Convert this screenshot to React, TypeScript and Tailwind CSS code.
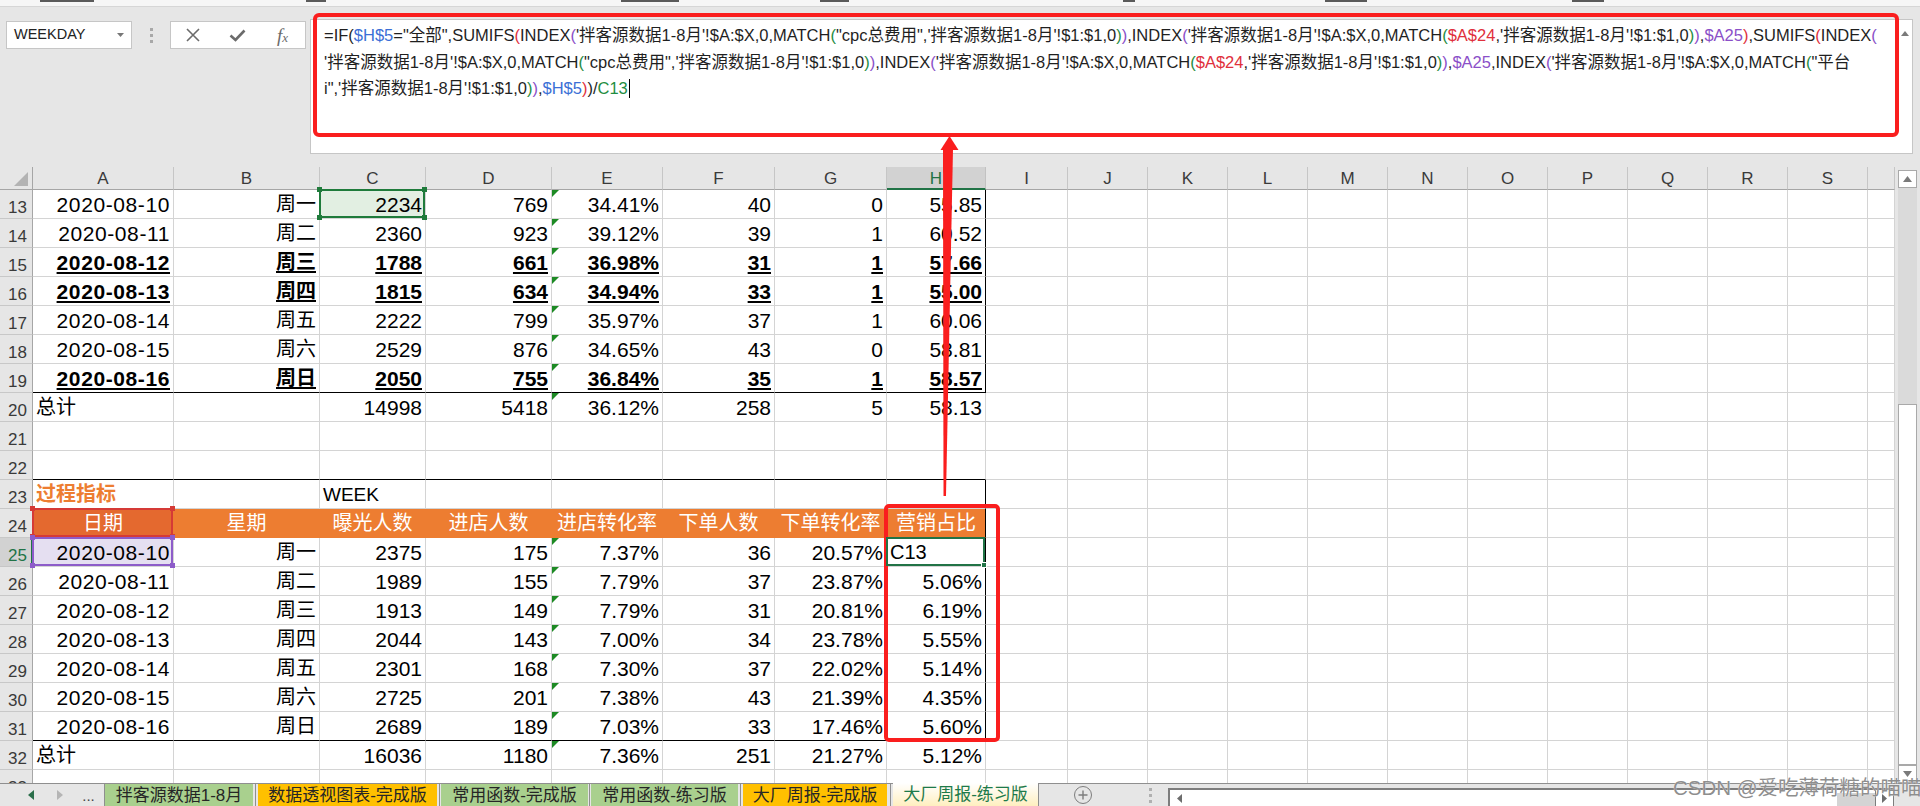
import React from 'react';

const FONT = "font-['Liberation_Sans','Noto_Sans_CJK_SC',sans-serif]";

type Cell = {
  t: string;
  a?: 'l' | 'r' | 'c';
  b?: boolean;
  u?: boolean;
  cjk?: boolean;
  date?: boolean;
  fs?: string;
  color?: string;
};

const W1 = [
  ['2020-08-10', '周一', '2234', '769', '34.41%', '40', '0', '55.85'],
  ['2020-08-11', '周二', '2360', '923', '39.12%', '39', '1', '60.52'],
  ['2020-08-12', '周三', '1788', '661', '36.98%', '31', '1', '57.66'],
  ['2020-08-13', '周四', '1815', '634', '34.94%', '33', '1', '55.00'],
  ['2020-08-14', '周五', '2222', '799', '35.97%', '37', '1', '60.06'],
  ['2020-08-15', '周六', '2529', '876', '34.65%', '43', '0', '58.81'],
  ['2020-08-16', '周日', '2050', '755', '36.84%', '35', '1', '58.57'],
];
const BOLD1 = [false, false, true, true, false, false, true];

const W2 = [
  ['2020-08-10', '周一', '2375', '175', '7.37%', '36', '20.57%', 'C13'],
  ['2020-08-11', '周二', '1989', '155', '7.79%', '37', '23.87%', '5.06%'],
  ['2020-08-12', '周三', '1913', '149', '7.79%', '31', '20.81%', '6.19%'],
  ['2020-08-13', '周四', '2044', '143', '7.00%', '34', '23.78%', '5.55%'],
  ['2020-08-14', '周五', '2301', '168', '7.30%', '37', '22.02%', '5.14%'],
  ['2020-08-15', '周六', '2725', '201', '7.38%', '43', '21.39%', '4.35%'],
  ['2020-08-16', '周日', '2689', '189', '7.03%', '33', '17.46%', '5.60%'],
];

function dataRow(v: string[], bold = false): (Cell | null)[] {
  return v.map((t, i) => ({ t, a: 'r', b: bold, u: bold, cjk: i === 1, date: i === 0 }));
}

const ROWS: Record<number, (Cell | null)[]> = {};
W1.forEach((v, i) => (ROWS[13 + i] = dataRow(v, BOLD1[i])));
ROWS[20] = [
  { t: '总计', a: 'l', cjk: true },
  null,
  ...['14998', '5418', '36.12%', '258', '5', '58.13'].map((t) => ({ t, a: 'r' } as Cell)),
];
ROWS[23] = [
  { t: '过程指标', a: 'l', cjk: true, b: true, color: 'text-[#ed7d31]' },
  null,
  { t: 'WEEK', a: 'l', fs: 'text-[19px]' },
];
ROWS[24] = ['日期', '星期', '曝光人数', '进店人数', '进店转化率', '下单人数', '下单转化率', '营销占比'].map(
  (t) => ({ t, a: 'c', cjk: true, color: 'text-white' } as Cell)
);
W2.forEach((v, i) => (ROWS[25 + i] = dataRow(v)));
ROWS[25][7] = { t: 'C13', a: 'l', fs: 'text-[20px]' };
ROWS[32] = [
  { t: '总计', a: 'l', cjk: true },
  null,
  ...['16036', '1180', '7.36%', '251', '21.27%', '5.12%'].map((t) => ({ t, a: 'r' } as Cell)),
];

const LETTERS = ['A', 'B', 'C', 'D', 'E', 'F', 'G', 'H', 'I', 'J', 'K', 'L', 'M', 'N', 'O', 'P', 'Q', 'R', 'S', ''];

function RefBox({ border, bg }: { border: string; bg: string }) {
  return (
    <div className={`absolute -left-px -top-px right-0 bottom-0 z-10 border-2 ${border}`}>
      <div className={`absolute -left-[4px] -top-[4px] w-[5px] h-[5px] ${bg}`} />
      <div className={`absolute -right-[4px] -top-[4px] w-[5px] h-[5px] ${bg}`} />
      <div className={`absolute -left-[4px] -bottom-[4px] w-[5px] h-[5px] ${bg}`} />
      <div className={`absolute -right-[4px] -bottom-[4px] w-[5px] h-[5px] ${bg}`} />
    </div>
  );
}

function BodyCell({ r, ci }: { r: number; ci: number }) {
  const d = ROWS[r]?.[ci] ?? null;
  const inTable = ci <= 7;
  const blackB = inTable && (r === 19 || r === 22 || r === 31);
  const blackR = ci === 7 && ((r >= 13 && r <= 19) || (r >= 23 && r <= 31));
  const orange = r === 24 && inTable;
  const errTri = ci === 4 && ((r >= 13 && r <= 20) || (r >= 25 && r <= 32));
  const isC13 = r === 13 && ci === 2;
  const isA24 = r === 24 && ci === 0;
  const isA25 = r === 25 && ci === 0;
  const isH25 = r === 25 && ci === 7;

  let borders = '';
  if (orange) {
    borders = `border-r border-b border-b-[#ed7d31] ${blackR ? 'border-r-black' : 'border-r-[#ed7d31]'}`;
  } else {
    borders = `border-r border-b ${blackR ? 'border-r-black' : 'border-r-[#d4d4d4]'} ${
      blackB ? 'border-b-black' : 'border-b-[#d4d4d4]'
    }`;
  }
  let bg = 'bg-white';
  if (orange) bg = isA24 ? 'bg-[#e4692f]' : 'bg-[#ed7d31]';
  if (isC13) bg = 'bg-[#e2efe2]';
  if (isA25) bg = 'bg-[#e5dff1]';

  let align = 'justify-end pr-[3px]';
  if (d?.a === 'l') align = 'justify-start pl-[3px]';
  if (d?.a === 'c') align = 'justify-center';
  const fs = d?.fs ?? (d?.cjk ? 'text-[20px]' : 'text-[21px]');
  const color = d?.color ?? 'text-black';

  return (
    <div className={`relative flex items-center overflow-visible whitespace-nowrap leading-none ${borders} ${bg} ${align}`}>
      {d && (
        <span
          className={`${fs} ${color} ${d.b ? 'font-bold' : ''} ${
            d.u ? 'underline decoration-[1.5px] underline-offset-[2px]' : ''
          } ${d.date ? 'tracking-[0.6px]' : ''}`}
        >
          {d.t}
        </span>
      )}
      {errTri && (
        <div className="absolute left-0 top-0 w-0 h-0 border-t-[7px] border-r-[7px] border-t-[#1d8a24] border-r-transparent" />
      )}
      {isC13 && <RefBox border="border-[#1f7b3b]" bg="bg-[#1f7b3b]" />}
      {isA24 && <RefBox border="border-[#d53a36]" bg="bg-[#d53a36]" />}
      {isA25 && <RefBox border="border-[#8d5cc9]" bg="bg-[#8d5cc9]" />}
      {isH25 && (
        <div className="absolute -left-px -top-px right-0 bottom-0 z-10 border-2 border-[#217346]">
          <div className="absolute -right-[4px] -bottom-[4px] w-[6px] h-[6px] bg-[#217346] border border-white" />
        </div>
      )}
    </div>
  );
}

function Sheet() {
  const rows = Array.from({ length: 21 }, (_, i) => 13 + i);
  return (
    <div className="w-[1895px] h-[616px] overflow-hidden">
      <div className="grid grid-cols-[33px_141px_146px_106px_126px_111px_112px_112px_99px_82px_repeat(10,80px)_27px] grid-rows-[23px_repeat(21,29px)]">
        <div className="bg-[#e6e6e6] border-r border-b border-r-[#a6a6a6] border-b-[#a6a6a6] flex items-end justify-end pr-[4px] pb-[3px]">
          <svg width="14" height="14" viewBox="0 0 14 14">
            <polygon points="14,0 14,14 0,14" fill="#b3b3b3" />
          </svg>
        </div>
        {LETTERS.map((L, i) =>
          L === 'H' ? (
            <div
              key={i}
              className="bg-[#d2d2d2] border-r border-r-[#c2c2c2] border-b-2 border-b-[#217346] flex items-center justify-center text-[17px] text-[#217346] pt-[2px]"
            >
              {L}
            </div>
          ) : (
            <div
              key={i}
              className="bg-[#e6e6e6] border-r border-b border-r-[#c6c6c6] border-b-[#a6a6a6] flex items-center justify-center text-[17px] text-[#3a3a3a] pt-[2px]"
            >
              {L}
            </div>
          )
        )}
        {rows.map((r) => (
          <React.Fragment key={r}>
            {r === 25 ? (
              <div className="bg-[#d2d2d2] border-b border-b-[#c6c6c6] border-r-2 border-r-[#217346] flex items-end pl-[8px] pb-[2px] text-[17px] leading-none text-[#217346]">
                {r}
              </div>
            ) : (
              <div className="bg-[#e6e6e6] border-b border-r border-b-[#c8c8c8] border-r-[#a6a6a6] flex items-end pl-[8px] pb-[2px] text-[17px] leading-none text-[#3a3a3a]">
                {r}
              </div>
            )}
            {LETTERS.map((_, ci) => (
              <BodyCell key={ci} r={r} ci={ci} />
            ))}
          </React.Fragment>
        ))}
      </div>
    </div>
  );
}

function VScroll() {
  return (
    <div className="w-[25px] h-full flex bg-[#e6e6e6]">
      <div className="w-[3px]" />
      <div className="w-[19px] h-full flex flex-col bg-[#dadada]">
        <div className="h-[3px] bg-[#e6e6e6]" />
        <div className="h-[18px] bg-white border border-[#a9a9a9] flex items-center justify-center">
          <svg width="9" height="6" viewBox="0 0 9 6">
            <polygon points="4.5,0 9,6 0,6" fill="#7a7a7a" />
          </svg>
        </div>
        <div className="h-[216px]" />
        <div className="flex-1 bg-white border border-[#a9a9a9]" />
        <div className="h-[18px] bg-white border border-[#a9a9a9] flex items-center justify-center">
          <svg width="9" height="6" viewBox="0 0 9 6">
            <polygon points="0,0 9,0 4.5,6" fill="#7a7a7a" />
          </svg>
        </div>
      </div>
    </div>
  );
}

const K = '#1f1f1f';
const BL = '#3b6fd6';
const RD = '#e0303c';
const PU = '#8b4fc8';
const GR = '#1f8d42';

const L1: [string, string][] = [
  ['=IF(', K], ['$H$5', BL], ['="全部",SUMIFS', K], ['(', RD], ['INDEX', K], ['(', PU],
  ["'拌客源数据1-8月'!$A:$X,0,MATCH", K], ['(', GR], ['"cpc总费用",\'拌客源数据1-8月\'!$1:$1,0', K],
  [')', GR], [')', PU], [',INDEX', K], ['(', PU], ["'拌客源数据1-8月'!$A:$X,0,MATCH", K], ['(', GR],
  ['$A$24', RD], [",'拌客源数据1-8月'!$1:$1,0", K], [')', GR], [')', PU], [',', K], ['$A25', PU],
  [')', RD], [',SUMIFS', K], ['(', RD], ['INDEX', K], ['(', PU],
];
const L2: [string, string][] = [
  ["'拌客源数据1-8月'!$A:$X,0,MATCH", K], ['(', GR], ['"cpc总费用",\'拌客源数据1-8月\'!$1:$1,0', K],
  [')', GR], [')', PU], [',INDEX', K], ['(', PU], ["'拌客源数据1-8月'!$A:$X,0,MATCH", K], ['(', GR],
  ['$A$24', RD], [",'拌客源数据1-8月'!$1:$1,0", K], [')', GR], [')', PU], [',', K], ['$A25', PU],
  [',INDEX', K], ['(', PU], ["'拌客源数据1-8月'!$A:$X,0,MATCH", K], ['(', GR], ['"平台', K],
];
const L3: [string, string][] = [
  ['i",\'拌客源数据1-8月\'!$1:$1,0', K], [')', GR], [')', PU], [',', K], ['$H$5', BL], [')', RD],
  [')', K], ['/', K], ['C13', GR],
];

function FLine({ segs, caret }: { segs: [string, string][]; caret?: boolean }) {
  return (
    <div className="whitespace-nowrap h-[26.7px] flex items-center">
      {segs.map(([t, c], i) => (
        <span key={i} style={{ color: c }}>
          {t}
        </span>
      ))}
      {caret && <span className="inline-block w-px h-[19px] bg-black ml-[1px]" />}
    </div>
  );
}

function Toolbar() {
  return (
    <div className="h-[160px] flex items-start">
      <div className="ml-[6px] mt-[14px] w-[126px] h-[28px] bg-white border border-[#c6c6c6] flex items-center justify-between pl-[7px] pr-[7px]">
        <span className="text-[14.5px] text-[#222]">WEEKDAY</span>
        <svg width="7" height="4" viewBox="0 0 7 4">
          <polygon points="0,0 7,0 3.5,4" fill="#777" />
        </svg>
      </div>
      <div className="w-[38px] mt-[21px] flex flex-col items-center gap-[3px]">
        <div className="w-[3px] h-[3px] bg-[#a8a8a8]" />
        <div className="w-[3px] h-[3px] bg-[#a8a8a8]" />
        <div className="w-[3px] h-[3px] bg-[#a8a8a8]" />
      </div>
      <div className="mt-[14px] w-[136px] h-[28px] bg-white border border-[#c6c6c6] flex items-center">
        <div className="w-[44px] flex justify-center">
          <svg width="14" height="14" viewBox="0 0 14 14">
            <path d="M1 1 L13 13 M13 1 L1 13" stroke="#6b6b6b" strokeWidth="1.6" />
          </svg>
        </div>
        <div className="w-[45px] flex justify-center">
          <svg width="17" height="13" viewBox="0 0 17 13">
            <polyline points="1.5,6.5 6.5,11 15.5,1.5" fill="none" stroke="#6b6b6b" strokeWidth="2.6" />
          </svg>
        </div>
        <div className="w-[45px] flex justify-center">
          <span className="font-['Liberation_Serif',serif] italic text-[19px] text-[#6b6b6b] leading-none">
            f<span className="text-[13px]">x</span>
          </span>
        </div>
      </div>
      <div className="ml-[4px] mt-[12px] w-[1603px] h-[135px] bg-white border border-[#c6c6c6] flex">
        <div className="flex-1 pl-[13px] pt-[2px] text-[16.5px] leading-none">
          <FLine segs={L1} />
          <FLine segs={L2} />
          <FLine segs={L3} caret />
        </div>
        <div className="w-[14px] pt-[11px] flex justify-center">
          <svg width="8" height="5" viewBox="0 0 8 5">
            <polygon points="4,0 8,5 0,5" fill="#7a7a7a" />
          </svg>
        </div>
      </div>
    </div>
  );
}

function TopStrip() {
  const marks: [number, number][] = [
    [40, 54],
    [306, 20],
    [621, 58],
    [820, 29],
    [1123, 12],
    [1325, 42],
    [1572, 32],
  ];
  let x = 0;
  return (
    <div className="h-[7px] bg-[#f6f6f6] border-b border-[#d6d6d6] flex items-start">
      {marks.map(([mx, w], i) => {
        const ml = mx - x;
        x = mx + w;
        return <div key={i} className="h-[2px] bg-[#5a5a5a]" style={{ marginLeft: ml, width: w }} />;
      })}
    </div>
  );
}

function Tab({ w, label, bg }: { w: string; label: string; bg: string }) {
  return (
    <div className={`${w} ${bg} h-full flex items-center justify-center text-[17px] text-[#262626] border-t border-[#8f8f8f] leading-none`}>
      {label}
    </div>
  );
}

function Sep({ w }: { w: string }) {
  return (
    <div className={`${w} h-full flex justify-center border-t border-[#8f8f8f]`}>
      <div className="w-px h-full bg-[#8f8f8f]" />
    </div>
  );
}

function TabBar() {
  return (
    <div className="h-[23px] flex bg-[#e6e6e6]">
      <div className="w-[103px] h-full flex items-center pl-[16px] border-t border-[#8f8f8f]">
        <div className="w-[29px] flex justify-center">
          <svg width="6" height="10" viewBox="0 0 6 10">
            <polygon points="6,0 6,10 0,5" fill="#2b6e4a" />
          </svg>
        </div>
        <div className="w-[29px] flex justify-center">
          <svg width="6" height="10" viewBox="0 0 6 10">
            <polygon points="0,0 0,10 6,5" fill="#b5b5b5" />
          </svg>
        </div>
        <div className="w-[29px] flex justify-center text-[15px] text-[#444] leading-[15px]">...</div>
      </div>
      <Sep w="w-[2px]" />
      <Tab w="w-[148px]" label="拌客源数据1-8月" bg="bg-[#a9d08e]" />
      <Sep w="w-[5px]" />
      <Tab w="w-[179px]" label="数据透视图表-完成版" bg="bg-[#ffc000]" />
      <Sep w="w-[4px]" />
      <Tab w="w-[147px]" label="常用函数-完成版" bg="bg-[#a9d08e]" />
      <Sep w="w-[3px]" />
      <Tab w="w-[147px]" label="常用函数-练习版" bg="bg-[#a9d08e]" />
      <Sep w="w-[5px]" />
      <Tab w="w-[144px]" label="大厂周报-完成版" bg="bg-[#ffc000]" />
      <Sep w="w-[6px]" />
      <div className="w-[145px] h-full flex items-center justify-center text-[17px] text-[#1d7a4a] leading-none bg-linear-to-b from-white to-[#ffefbf]">
        大厂周报-练习版
      </div>
      <div className="w-[130px] h-full flex items-center border-t border-[#8f8f8f] border-l border-l-[#8f8f8f]">
        <div className="ml-[35px] w-[18px] h-[18px] rounded-full border-[1.5px] border-[#7d7d7d] flex items-center justify-center">
          <svg width="10" height="10" viewBox="0 0 10 10">
            <path d="M5 0.5 V9.5 M0.5 5 H9.5" stroke="#7d7d7d" strokeWidth="1.4" />
          </svg>
        </div>
        <div className="ml-[57px] flex flex-col gap-[3px]">
          <div className="w-[3px] h-[3px] bg-[#b0b0b0]" />
          <div className="w-[3px] h-[3px] bg-[#b0b0b0]" />
          <div className="w-[3px] h-[3px] bg-[#b0b0b0]" />
        </div>
      </div>
      <div className="w-[726px] h-full flex flex-col border-t border-[#8f8f8f]">
        <div className="h-[4px]" />
        <div className="flex-1 flex bg-white border-t-2 border-l-2 border-r border-[#7d7d7d]">
          <div className="w-[18px] flex items-center justify-center">
            <svg width="5" height="9" viewBox="0 0 5 9">
              <polygon points="5,0 5,9 0,4.5" fill="#6d6d6d" />
            </svg>
          </div>
          <div className="flex-1" />
          <div className="w-[38px] mt-[3px] bg-[#d4d4d4]" />
          <div className="w-[18px] flex items-center justify-center border-l border-[#7d7d7d]">
            <svg width="5" height="9" viewBox="0 0 5 9">
              <polygon points="0,0 0,9 5,4.5" fill="#6d6d6d" />
            </svg>
          </div>
        </div>
      </div>
      <div className="flex-1 h-full border-t border-[#8f8f8f]" />
    </div>
  );
}

function Overlays() {
  return (
    <>
      <div className="absolute left-[313px] top-[13px] w-[1586px] h-[124px] border-[4px] border-[#fa1e1e] rounded-[6px] pointer-events-none" />
      <div className="absolute left-[884px] top-[504px] w-[116px] h-[238px] border-[4px] border-[#fa1e1e] rounded-[5px] pointer-events-none" />
      <svg className="absolute left-0 top-0 pointer-events-none" width="1920" height="806" viewBox="0 0 1920 806">
        <polygon points="949.5,136 958.5,150 940.5,150" fill="#fa1e1e" />
        <polygon points="943,149 953,149 946,496 943.5,496" fill="#fa1e1e" />
      </svg>
      <div className="absolute left-[1673px] top-[777px] text-[20.5px] leading-[22px] text-[#8e8e8e] whitespace-nowrap pointer-events-none [text-shadow:0_0_1px_#fff]">
        CSDN @爱吃薄荷糖的喵喵
      </div>
    </>
  );
}

export default function App() {
  return (
    <div className={`relative w-[1920px] h-[806px] overflow-hidden bg-[#e6e6e6] text-black ${FONT}`}>
      <TopStrip />
      <Toolbar />
      <div className="flex h-[616px]">
        <Sheet />
        <VScroll />
      </div>
      <TabBar />
      <Overlays />
    </div>
  );
}
